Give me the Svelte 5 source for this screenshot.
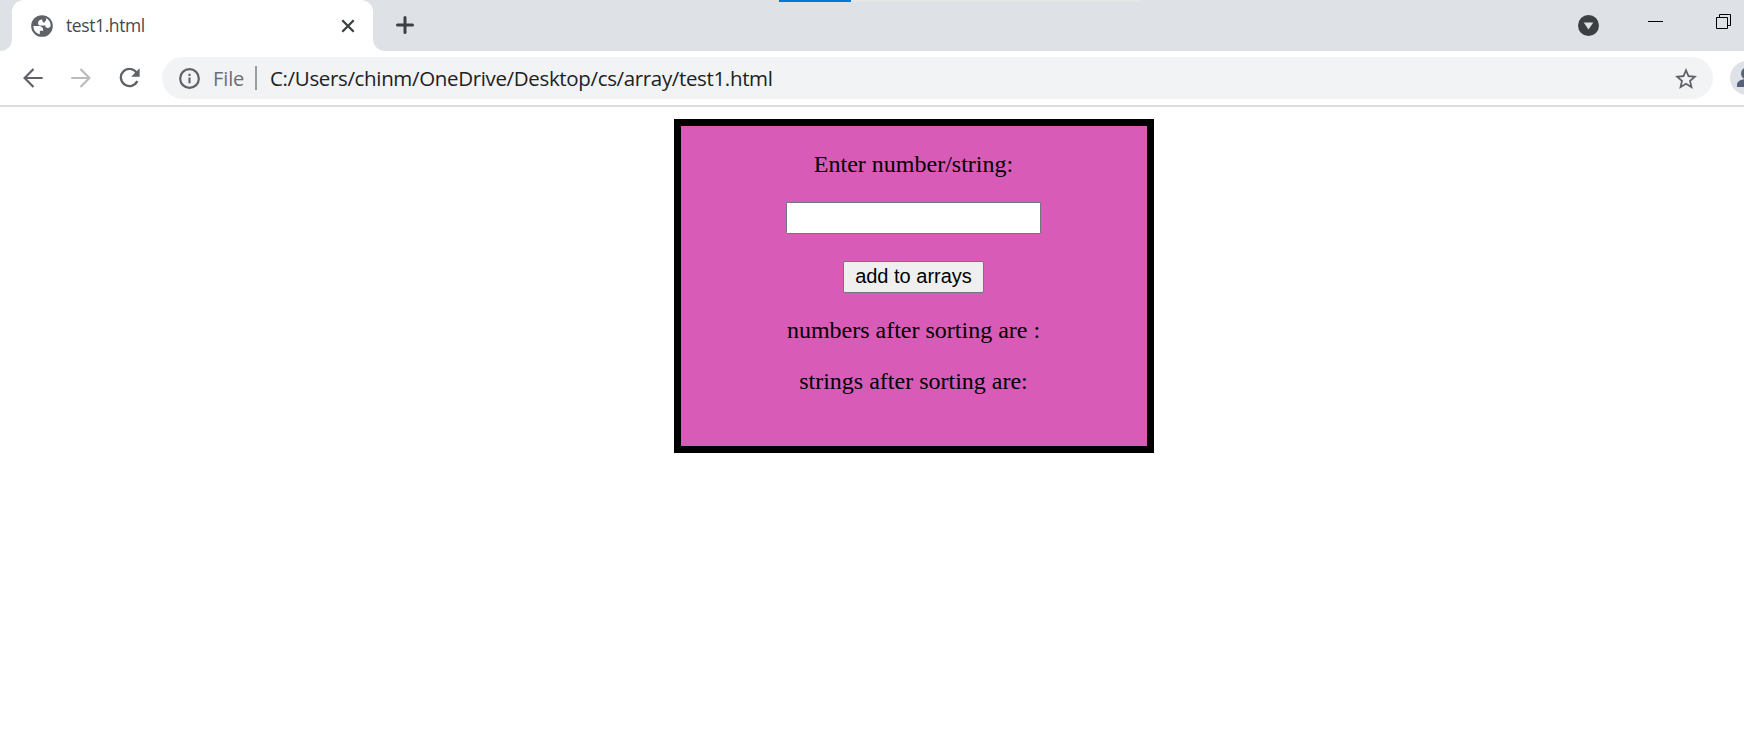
<script>
  let entry = $state('');
  let numbers = $state([]);
  let strings = $state([]);

  function add() {
    const value = entry.trim();
    if (value === '') return;
    if (Number.isNaN(Number(value))) strings = [...strings, value].sort();
    else numbers = [...numbers, Number(value)].sort((a, b) => a - b);
    entry = '';
  }
</script>

<div class="window">
  <header class="strip">
    <div class="edge"></div>
    <div class="tab-back">
      <div class="tab">
        <svg class="globe" width="26" height="26" viewBox="0 0 24 24">
          <circle cx="12" cy="12" r="10" fill="#5f6368" />
          <path d="M4 12h4.800c3 0 4.500 1.500 4.400 4.400H10v3.300A8 8 0 0 1 4 12zM14.800 4.400A8 8 0 0 1 20 12c-.5 1.200-1.400 1.800-2.600 1.800-1.600 0-2.400-.8-2.400-2.200h-4.200c-1.700 0-2.500-.9-2.400-2.400.1-2 1.400-3.100 3.800-3.200 0 1.600.6 2.700 2 2.900.5-1.400 1.800-1.800 1.700-3.200 0-.6-.4-1-1.100-1.300z" fill="#fff" />
        </svg>
        <span class="title">test1.html</span>
        <svg class="close" width="14" height="14" viewBox="0 0 14 14" stroke="#3c4043" stroke-width="2.300"><path d="M1.300 1.300l11.400 11.400M12.700 1.300L1.300 12.700" /></svg>
      </div>
    </div>
    <div class="rest">
      <svg class="plus" width="18" height="18" viewBox="0 0 18 18" stroke="#3c4043" stroke-width="3" stroke-linecap="round"><path d="M9 1.500v15M1.500 9h15" /></svg>
      <div class="progress"><i></i></div>
      <svg class="search" width="21" height="21" viewBox="0 0 21 21"><circle cx="10.500" cy="10.500" r="10.500" fill="#3c4043" /><path d="M5.700 7.500h9.600l-4.800 7z" fill="#dee1e6" /></svg>
      <svg class="min" width="15" height="1" viewBox="0 0 15 1"><path d="M0 0h15v1H0z" /></svg>
      <svg class="restore" width="15" height="15" viewBox="0 0 15 15" fill="none" stroke="#000"><path d="M.5 3.500h11v11H.5zM3.500 3.500v-3h11v11h-3" /></svg>
    </div>
  </header>

  <nav class="toolbar">
    <svg class="back" width="20" height="20" viewBox="0 0 20 20" fill="none" stroke="#5f6368" stroke-width="2.200"><path d="M19.700 10H1.700M10.500 1L1.600 10l8.900 9" /></svg>
    <svg class="forward" width="20" height="20" viewBox="0 0 20 20" fill="none" stroke="#babcbe" stroke-width="2.200"><path d="M.3 10h18M9.500 1l8.900 9-8.900 9" /></svg>
    <svg class="reload" width="21" height="20" viewBox="0 0 21 20" fill="none"><path d="M17.600 4.700A8.600 8.600 0 1 0 18.300 13" stroke="#5f6368" stroke-width="2.300" /><path d="M20.600.3v8.400h-8.400z" fill="#5f6368" /></svg>
    <div class="address">
      <svg class="info" width="21" height="21" viewBox="0 0 20 20"><circle cx="10" cy="10" r="8.900" fill="none" stroke="#5f6368" stroke-width="2.100" /><path d="M9 9h2v5.500H9zM9 5.500h2v2H9z" fill="#5f6368" /></svg>
      <span class="scheme">File</span>
      <i class="divider"></i>
      <span class="url">C:/Users/chinm/OneDrive/Desktop/cs/array/test1.html</span>
      <svg class="star" width="22" height="21" viewBox="2 2 20 19" fill="#5f6368"><path d="M22 9.240l-7.190-.62L12 2 9.190 8.630 2 9.240l5.460 4.730L5.820 21 12 17.270 18.180 21l-1.630-7.030L22 9.240zM12 15.400l-3.760 2.270 1-4.280-3.320-2.880 4.380-.38L12 6.100l1.710 4.040 4.380.38-3.320 2.880 1 4.280L12 15.400z" /></svg>
    </div>
    <svg class="avatar" width="14" height="34" viewBox="0 0 14 34"><circle cx="17" cy="17" r="17" fill="#dee1e6" /><circle cx="17" cy="12.500" r="6" fill="#56627a" /><path d="M7 26v-2.500c0-4 6-5.500 10-5.500v8z" fill="#56627a" /></svg>
  </nav>

  <main>
    <section class="panel">
      <p class="prompt">Enter number/string:</p>
      <input type="text" bind:value={entry} />
      <button onclick={add}>add to arrays</button>
      <p>numbers after sorting are :{numbers.join(',')}</p>
      <p>strings after sorting are:{strings.join(',')}</p>
    </section>
  </main>
</div>

<style>
  :global(body) { margin: 0; background: #fff; overflow: hidden; }
  svg { display: block; flex: none; }
  .window { width: 1744px; height: 741px; overflow: hidden; background: #fff; font-family: "Open Sans", "Noto Sans", sans-serif; }
  .strip { display: flex; height: 51px; }
  .edge { flex: none; width: 12px; background: #dee1e6; border-bottom-right-radius: 12px; }
  .tab-back { flex: none; width: 361px; background: linear-gradient(#dee1e6 20px, #fff 20px); }
  .tab { display: flex; align-items: center; box-sizing: border-box; height: 51px; padding: 0 18px 0 17px; background: #fff; border-radius: 12px 12px 0 0; }
  .title { margin-left: 11px; flex: 1; padding-bottom: 1px; font-size: 17.500px; letter-spacing: -0.4px; color: #45494d; white-space: nowrap; }
  .rest { flex: 1; display: flex; align-items: flex-start; background: #dee1e6; border-bottom-left-radius: 12px; }
  .plus { margin: 16px 0 0 23px; }
  .progress { flex: none; width: 362px; height: 2px; margin-left: 365px; background: #e6e6e6; }
  .progress i { display: block; width: 72px; height: 2px; background: #0078d7; }
  .search { margin: 15px 0 0 437px; }
  .min { margin: 21px 0 0 49px; }
  .restore { margin: 14px 0 0 53px; }
  .toolbar { display: flex; align-items: center; box-sizing: border-box; height: 56px; padding: 0 0 0 23px; border-bottom: 2px solid #dadce0; }
  .forward { margin-left: 28px; }
  .reload { margin-left: 28px; }
  .address { display: flex; align-items: center; box-sizing: border-box; width: 1551px; height: 42px; margin-left: 22px; padding: 0 16px 0 17px; flex: none; border-radius: 21px; background: #f1f3f4; }
  .scheme { width: 42px; margin-left: 13px; padding-top: 1px; font-size: 20px; letter-spacing: -0.1px; color: #6b6f74; }
  .divider { width: 2px; height: 24px; background: #9c9fa2; }
  .url { margin-left: 13px; flex: 1; font-size: 20.500px; letter-spacing: -0.345px; color: #202124; white-space: nowrap; }
  .avatar { margin-left: 17px; }
  main { display: flex; padding: 12px 0 0 674px; }
  .panel { display: flex; flex-direction: column; align-items: center; box-sizing: border-box; width: 480px; height: 334px; padding: 24px 1px 0 0; border: 7px solid #000; background: #d85bb8; font: 24px/27px "Liberation Serif", serif; color: #000; }
  p { margin: 0; white-space: pre; }
  .prompt { padding-top: 1px; }
  input { box-sizing: border-box; width: 255px; height: 32px; margin: 24px 0 27px; padding: 2px 3px; border: 1px solid #767676; border-radius: 1px; background: #fff; font: 20px "Liberation Sans", sans-serif; outline: none; }
  button { box-sizing: border-box; width: 141px; height: 32px; margin-bottom: 24px; padding: 0 0 2px; border: 1px solid #767676; border-radius: 2px; background: #efefef; font: 20px "Liberation Sans", sans-serif; color: #000; white-space: nowrap; }
  button + p { margin-bottom: 24px; }
</style>
